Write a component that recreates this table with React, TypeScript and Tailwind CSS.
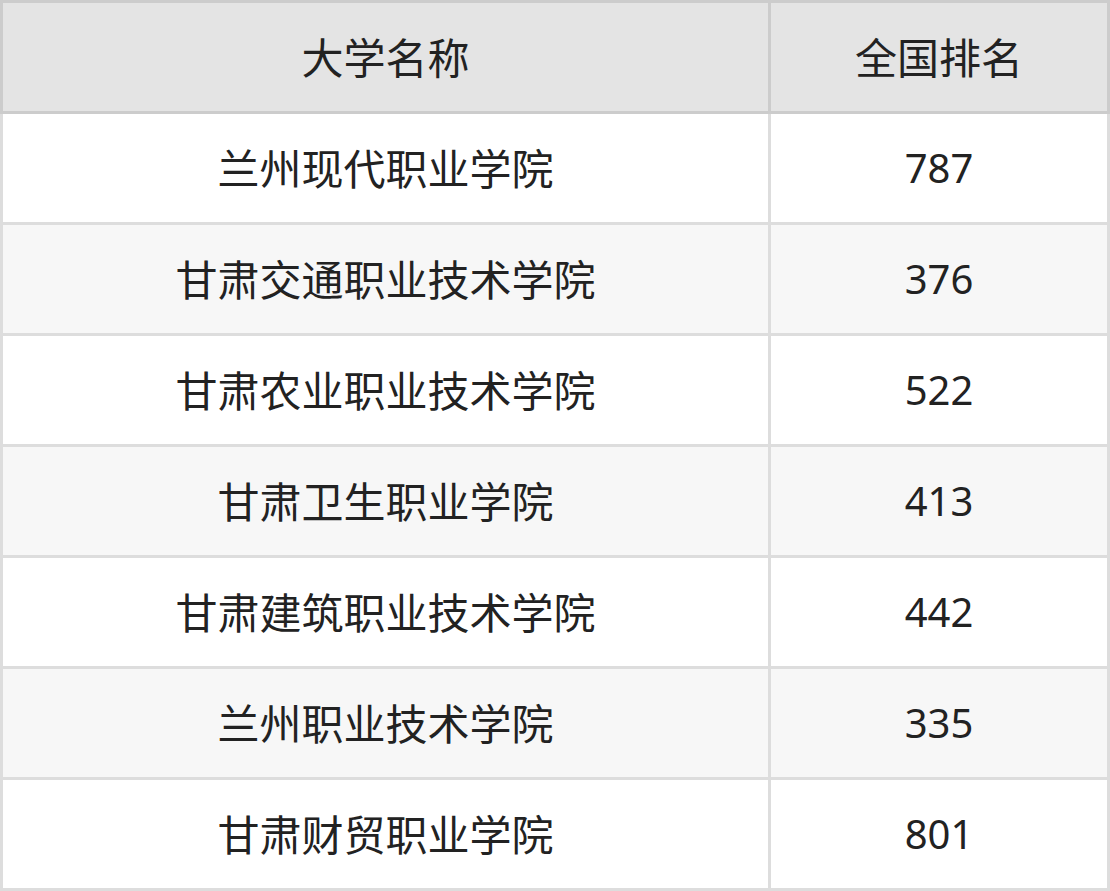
const rows = [
  { name: '兰州现代职业学院', rank: '787' },
  { name: '甘肃交通职业技术学院', rank: '376' },
  { name: '甘肃农业职业技术学院', rank: '522' },
  { name: '甘肃卫生职业学院', rank: '413' },
  { name: '甘肃建筑职业技术学院', rank: '442' },
  { name: '兰州职业技术学院', rank: '335' },
  { name: '甘肃财贸职业学院', rank: '801' },
];

const App = () => {
  return (
    <div
      className="w-[1110px] h-[891px] bg-white text-[#222222] text-[40px]"
      style={{ fontFamily: '"Noto Sans", "Noto Sans CJK SC", sans-serif' }}
    >
      <table className="w-full border-collapse table-fixed">
        <colgroup>
          <col className="w-[768px]" />
          <col />
        </colgroup>
        <thead>
          <tr className="bg-[#e4e4e4] h-[111px]">
            <th className="border-[3px] border-[#cccccc] font-normal text-center text-[42px]">大学名称</th>
            <th className="border-[3px] border-[#cccccc] font-normal text-center text-[42px]">全国排名</th>
          </tr>
        </thead>
        <tbody>
          {rows.map((row, i) => (
            <tr key={row.name} className={`h-[111px] ${i % 2 === 1 ? 'bg-[#f7f7f7]' : 'bg-white'}`}>
              <td className="border-[3px] border-[#dddddd] text-center text-[42px]">{row.name}</td>
              <td className="border-[3px] border-[#dddddd] text-center">{row.rank}</td>
            </tr>
          ))}
        </tbody>
      </table>
    </div>
  );
};

export default App;
